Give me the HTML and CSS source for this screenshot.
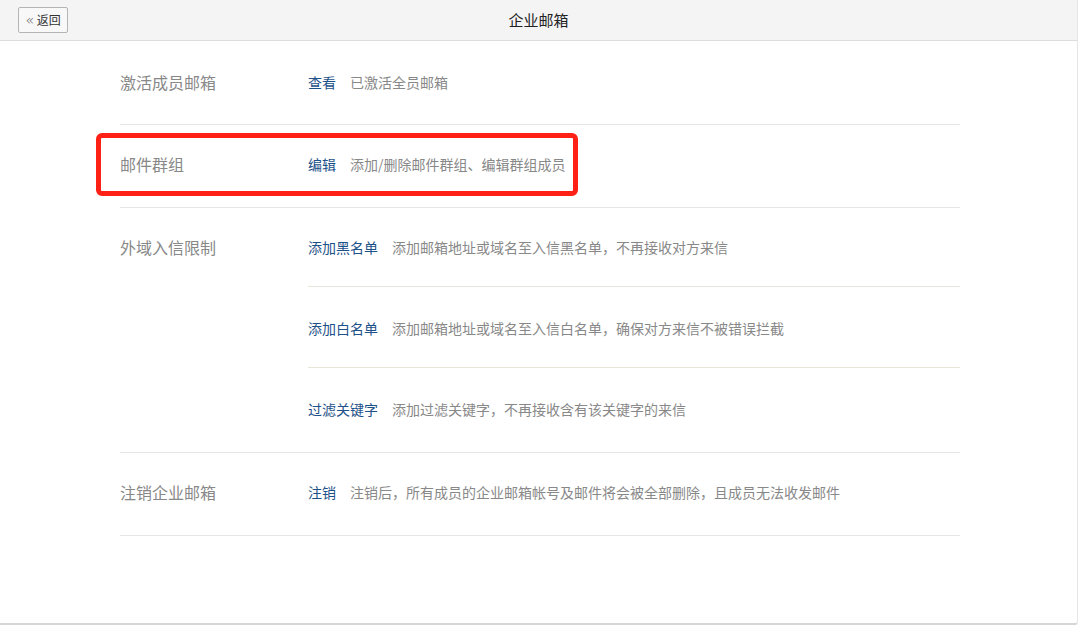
FILE: index.html
```html
<!doctype html>
<html>
<head>
	<meta charset="utf-8" />
	<title>企业邮箱</title>
	<link rel="stylesheet" href="styles.css">
</head>
<body>
	<div class="page">
		<div class="topbar">
			<a class="back-btn"><span class="back-arrow">&laquo;</span> 返回</a>
			<h1 class="topbar-title">企业邮箱</h1>
		</div>

		<div class="settings">
			<div class="setting-row">
				<div class="setting-label">激活成员邮箱</div>
				<div class="setting-items">
					<div class="setting-item"><a class="op">查看</a><span class="desc">已激活全员邮箱</span></div>
				</div>
			</div>

			<div class="setting-row setting-marked">
				<div class="setting-label">邮件群组</div>
				<div class="setting-items">
					<div class="setting-item"><a class="op">编辑</a><span class="desc">添加/删除邮件群组、编辑群组成员</span></div>
				</div>
				<div class="mark-box"></div>
			</div>

			<div class="setting-row">
				<div class="setting-label">外域入信限制</div>
				<div class="setting-items">
					<div class="setting-item"><a class="op">添加黑名单</a><span class="desc">添加邮箱地址或域名至入信黑名单，不再接收对方来信</span></div>
					<div class="setting-item"><a class="op">添加白名单</a><span class="desc">添加邮箱地址或域名至入信白名单，确保对方来信不被错误拦截</span></div>
					<div class="setting-item"><a class="op">过滤关键字</a><span class="desc">添加过滤关键字，不再接收含有该关键字的来信</span></div>
				</div>
			</div>

			<div class="setting-row">
				<div class="setting-label">注销企业邮箱</div>
				<div class="setting-items">
					<div class="setting-item"><a class="op">注销</a><span class="desc">注销后，所有成员的企业邮箱帐号及邮件将会被全部删除，且成员无法收发邮件</span></div>
				</div>
			</div>
		</div>
	</div>
</body>
</html>
```

FILE: styles.css
```css
body { margin: 0; background: #fff; font: 14px/19px "Noto Sans CJK SC", "Noto Sans", sans-serif; color: #333; }
a { cursor: pointer; text-decoration: none; }

.page { width: 1078px; height: 625px; box-sizing: border-box; border-right: 1px solid #e6e6e6; border-bottom: 2px solid #d6d6d6; border-bottom-right-radius: 3px; }

.topbar { position: relative; height: 40px; background: #f4f4f4; border-bottom: 1px solid #dcdcdc; display: flex; align-items: center; justify-content: center; }
.topbar-title { margin: 0; font-size: 15px; font-weight: normal; color: #222; line-height: 20px; }
.back-btn { position: absolute; left: 18px; top: 7px; width: 50px; height: 26px; box-sizing: border-box; border: 1px solid #b5b5b5; border-radius: 2px; background: #f8f8f8; font-size: 12px; line-height: 24px; color: #333; text-align: center; }
.back-arrow { font-family: "DejaVu Sans", sans-serif; font-size: 14px; font-weight: 200; color: #666; }

.settings { width: 840px; margin-left: 120px; }
.setting-row { display: flex; border-bottom: 1px solid #e6e6e6; }
.setting-label { width: 188px; flex-shrink: 0; padding-top: 29px; font-size: 16px; line-height: 21px; color: #888; }
.setting-row:first-child .setting-label { padding-top: 31px; }
.setting-items { flex: 1; }
.setting-item { padding: 32px 0 29px; line-height: 19px; border-bottom: 1px solid #e8e6da; }
.setting-item:first-child { padding-top: 30px; }
.setting-item:last-child { border-bottom: 0; padding-bottom: 33px; }
.setting-row:first-child .setting-item { padding-top: 32px; padding-bottom: 32px; }
.op { color: #1d5189; }
.desc { margin-left: 14px; color: #888; }

.setting-marked { position: relative; }
.mark-box { position: absolute; left: -24px; top: 8px; width: 482px; height: 63px; box-sizing: border-box; border: 5px solid #ff2116; border-radius: 6px; }
```
